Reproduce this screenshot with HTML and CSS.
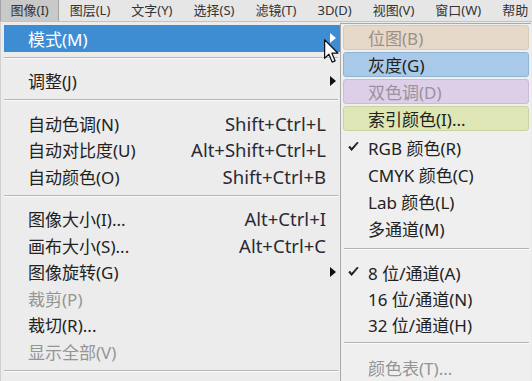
FILE: index.html
```html
<!DOCTYPE html>
<html lang="zh-CN">
<head>
    <meta charset="UTF-8">
    <title>图像菜单</title>
    <link rel="stylesheet" href="styles.css">
</head>
<body>

<div class="menubar">
    <span class="bar_item bar_active">图像(I)</span>
    <span class="bar_item">图层(L)</span>
    <span class="bar_item">文字(Y)</span>
    <span class="bar_item">选择(S)</span>
    <span class="bar_item">滤镜(T)</span>
    <span class="bar_item">3D(D)</span>
    <span class="bar_item">视图(V)</span>
    <span class="bar_item">窗口(W)</span>
    <span class="bar_item bar_last">帮助</span>
</div>

<div class="menus">
    <div class="menu">
        <div class="item item_hover">模式(M)<span class="arrow arrow_white"></span></div>
        <div class="sep"></div>
        <div class="item">调整(J)<span class="arrow"></span></div>
        <div class="sep"></div>
        <div class="item">自动色调(N)<span class="key">Shift+Ctrl+L</span></div>
        <div class="item">自动对比度(U)<span class="key">Alt+Shift+Ctrl+L</span></div>
        <div class="item">自动颜色(O)<span class="key">Shift+Ctrl+B</span></div>
        <div class="sep"></div>
        <div class="item">图像大小(I)...<span class="key">Alt+Ctrl+I</span></div>
        <div class="item">画布大小(S)...<span class="key">Alt+Ctrl+C</span></div>
        <div class="item">图像旋转(G)<span class="arrow"></span></div>
        <div class="item item_off">裁剪(P)</div>
        <div class="item">裁切(R)...</div>
        <div class="item item_off">显示全部(V)</div>
        <div class="sep"></div>
    </div>

    <div class="submenu">
        <div class="sub_item box_beige item_off"><span class="tick"></span>位图(B)</div>
        <div class="sub_item box_blue"><span class="tick"></span>灰度(G)</div>
        <div class="sub_item box_purple item_off"><span class="tick"></span>双色调(D)</div>
        <div class="sub_item box_green"><span class="tick"></span>索引颜色(I)...</div>
        <div class="sub_item sub_first">
            <span class="tick"><svg width="11" height="10" viewBox="0 0 11 10"><path d="M0.8 5.2 L3.6 8.6 L10.2 0.8 L9.2 0.2 L3.7 6.4 L2 4.2 Z" fill="#1a1a1a" stroke="#1a1a1a" stroke-width="0.8" stroke-linejoin="round"/></svg></span>RGB 颜色(R)
        </div>
        <div class="sub_item"><span class="tick"></span>CMYK 颜色(C)</div>
        <div class="sub_item"><span class="tick"></span>Lab 颜色(L)</div>
        <div class="sub_item"><span class="tick"></span>多通道(M)</div>
        <div class="sub_sep sep_a"></div>
        <div class="sub_item sub_low">
            <span class="tick"><svg width="11" height="10" viewBox="0 0 11 10"><path d="M0.8 5.2 L3.6 8.6 L10.2 0.8 L9.2 0.2 L3.7 6.4 L2 4.2 Z" fill="#1a1a1a" stroke="#1a1a1a" stroke-width="0.8" stroke-linejoin="round"/></svg></span>8 位/通道(A)
        </div>
        <div class="sub_item sub_low"><span class="tick"></span>16 位/通道(N)</div>
        <div class="sub_item sub_low"><span class="tick"></span>32 位/通道(H)</div>
        <div class="sub_sep sep_b"></div>
        <div class="sub_item sub_low item_off"><span class="tick"></span>颜色表(T)...</div>
    </div>
</div>

<!-- mouse pointer over the open submenu -->
<svg class="cursor" width="16" height="25" viewBox="0 0 13 20">
    <path d="M0.5 0.5 L0.5 15.5 L4 12.2 L6.6 18.6 L9 17.6 L6.4 11.4 L11.4 11.4 Z" fill="#ffffff" stroke="#111111" stroke-width="1" stroke-linejoin="round"/>
</svg>

</body>
</html>
```

FILE: styles.css
```css
body {
    margin: 0;
    width: 532px;
    height: 381px;
    overflow: hidden;
    background-color: #ebebeb;
    font-family: "Noto Sans", "Noto Sans CJK SC", sans-serif;
    color: #222222;
    position: relative;
}

.menubar {
    height: 21px;
    display: flex;
    overflow: hidden;
    background-color: #e6e6e6;
    border-bottom: 1px solid #c2c2c2;
    font-size: 13px;
    line-height: 21px;
    color: #333333;
    white-space: nowrap;
}

.bar_item {
    flex-shrink: 0;
    padding: 0 10.5px;
}

.bar_last {
    padding: 0 0 0 10.5px;
}

.bar_active {
    padding: 0 9.5px;
    background-color: #c9c9c9;
    border: 1px solid #a4a4a4;
    border-top: none;
    border-bottom: none;
}

.menus {
    display: flex;
    align-items: flex-start;
}

.menu {
    width: 336px;
    height: 359px;
    display: flex;
    flex-direction: column;
    padding: 3px 0 0 3px;
    border-left: 1px solid #cfcfcf;
    background-color: #ececec;
    font-size: 17px;
}

.item {
    height: 26.5px;
    display: flex;
    align-items: center;
    padding: 0 14px 0 24px;
    white-space: nowrap;
}

.item_hover {
    background-color: #3e8dd3;
    color: #ffffff;
}

.item_off {
    color: #959595;
}

.key {
    margin-left: auto;
    font-size: 18.5px;
    color: #2a2a34;
}

.arrow {
    margin-left: auto;
    margin-right: -10px;
    width: 0;
    height: 0;
    border-top: 5px solid transparent;
    border-bottom: 5px solid transparent;
    border-left: 6px solid #111111;
}

.arrow_white {
    border-left-color: #ffffff;
}

.sep {
    height: 1px;
    margin: 5px 2px 9px 0;
    background-color: #b6b6b6;
    border-bottom: 1px solid #fafafa;
}

.submenu {
    width: 190px;
    height: 357px;
    margin-top: 1px;
    display: flex;
    flex-direction: column;
    background-color: #efefef;
    border: 1px solid #a9a9a9;
    border-right: none;
    border-bottom: none;
    font-size: 17px;
}

.sub_item {
    height: 25px;
    margin: 1px 2px 1px 2px;
    padding-left: 4px;
    display: flex;
    align-items: center;
    box-sizing: border-box;
    border: 1px solid transparent;
    border-radius: 3px;
    white-space: nowrap;
}

.sub_first {
    margin-top: 2.5px;
}

.sub_low {
    height: 24px;
}

.tick {
    width: 20px;
    display: flex;
    align-items: center;
}

.box_beige {
    background-color: #e7d9c9;
    border-color: #d8c9b8;
    color: #9a9189;
}

.box_blue {
    background-color: #a9c9e8;
    border-color: #8fb2d7;
}

.box_purple {
    background-color: #ddcfe8;
    border-color: #cbbbd9;
    color: #9a929f;
}

.box_green {
    background-color: #dde6b4;
    border-color: #c9d49e;
}

.sub_sep {
    height: 1px;
    margin: 0 2px 0 3px;
    background-color: #b4b4b4;
    border-bottom: 1px solid #fafafa;
}

.sep_a {
    margin-top: 6px;
    margin-bottom: 9.5px;
}

.sep_b {
    margin-top: 5px;
    margin-bottom: 10px;
}

.cursor {
    position: absolute;
    left: 324px;
    top: 39px;
}
```
